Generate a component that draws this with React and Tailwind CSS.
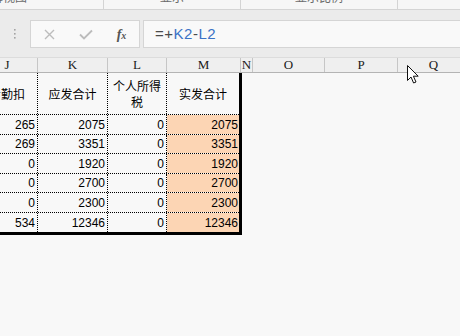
import React from 'react';

const rows = [
  { h: 'h-[20px]', v: ['265', '2075', '0', '2075'] },
  { h: 'h-[19px]', v: ['269', '3351', '0', '3351'] },
  { h: 'h-[20px]', v: ['0', '1920', '0', '1920'] },
  { h: 'h-[19px]', v: ['0', '2700', '0', '2700'] },
  { h: 'h-[20px]', v: ['0', '2300', '0', '2300'] },
  { h: 'h-[19px]', v: ['534', '12346', '0', '12346'], last: true },
];

const cols = [
  { l: 'J', w: 'w-[61px] -ml-[23px]' },
  { l: 'K', w: 'w-[70px]' },
  { l: 'L', w: 'w-[59px]' },
  { l: 'M', w: 'w-[74px]' },
  { l: 'N', w: 'w-[12px]' },
  { l: 'O', w: 'w-[72px]' },
  { l: 'P', w: 'w-[73px]' },
  { l: 'Q', w: 'w-[72px]' },
];

function Cursor() {
  return (
    <svg className="absolute left-[406px] top-[64px]" width="14" height="21" viewBox="0 0 14 21">
      <path
        d="M1.5 1.5 L1.5 16.5 L5 13 L7.6 19 L10 18 L7.4 12.2 L12.2 12.2 Z"
        fill="#fff"
        stroke="#111"
        strokeWidth="1"
        strokeLinejoin="round"
      />
    </svg>
  );
}

export default function App() {
  return (
    <div className="relative w-[460px] h-[336px] overflow-hidden bg-[#f8f8f8] font-['Liberation_Sans','Noto_Sans_CJK_SC',sans-serif]">
      {/* ribbon group labels, cut off at top */}
      <div className="flex h-[10px] overflow-hidden border-b border-[#d4d4d4] bg-[#f6f6f6] text-[12px] text-[#6a6a6a] font-['Noto_Sans_CJK_SC',sans-serif]">
        <div className="w-[104px] shrink-0 border-r border-[#d4d4d4]">
          <span className="block -ml-[33px] -mt-[10px] leading-[14px] whitespace-nowrap">工作簿视图</span>
        </div>
        <div className="w-[137px] shrink-0 border-r border-[#d4d4d4] flex justify-center">
          <span className="block -mt-[10px] leading-[14px]">显示</span>
        </div>
        <div className="w-[157px] shrink-0 border-r border-[#d4d4d4] flex justify-center">
          <span className="block -mt-[10px] leading-[14px]">显示比例</span>
        </div>
        <div className="flex-1" />
      </div>

      {/* formula bar */}
      <div className="flex bg-[#ebebeb] pt-[10px] pb-[9px]">
        <div className="w-[30px] shrink-0 flex justify-center items-center">
          <svg width="4" height="12" viewBox="0 0 4 12">
            <rect x="1" y="1" width="1.6" height="1.6" fill="#a3a3a3" />
            <rect x="1" y="5" width="1.6" height="1.6" fill="#a3a3a3" />
            <rect x="1" y="9" width="1.6" height="1.6" fill="#a3a3a3" />
          </svg>
        </div>
        <div className="w-[110px] h-[28px] shrink-0 flex items-center border border-[#d5d5d5] bg-[#f9f9f9]">
          <div className="w-[37px] flex justify-center">
            <svg width="11" height="11" viewBox="0 0 11 11">
              <path d="M1 1 L10 10 M10 1 L1 10" stroke="#bcbcbc" strokeWidth="1.4" />
            </svg>
          </div>
          <div className="w-[36px] flex justify-center">
            <svg width="14" height="11" viewBox="0 0 14 11">
              <path d="M1 5.5 L5 9.5 L13 1.5" stroke="#bcbcbc" strokeWidth="1.8" fill="none" />
            </svg>
          </div>
          <div className="w-[35px] flex justify-center items-baseline font-['Liberation_Serif',serif] italic text-[#555]">
            <span className="text-[14px] font-bold">f</span>
            <span className="text-[10px] font-bold">x</span>
          </div>
        </div>
        <div className="ml-[3px] -mr-[10px] flex-1 h-[28px] flex items-center pl-[11px] border border-[#d5d5d5] bg-[#f9f9f9] text-[15px] tracking-[0.5px]">
          <span className="text-[#4a4a4a]">=+</span>
          <span className="text-[#3b72c6]">K2</span>
          <span className="text-[#4a4a4a]">-</span>
          <span className="text-[#3b72c6]">L2</span>
        </div>
      </div>

      {/* column headers */}
      <div className="flex h-[16px] bg-[#efefef] border-t border-b border-[#b4b4b4] border-t-[#dcdcdc] font-['Liberation_Serif',serif] text-[13px] text-[#1a1a1a] leading-[14px]">
        {cols.map((c) => (
          <div key={c.l} className={`${c.w} shrink-0 border-r border-[#c6c6c6] flex justify-center items-center`}>
            {c.l}
          </div>
        ))}
      </div>

      {/* grid */}
      <div className="-ml-[23px] w-fit border-r-[3px] border-b-[3px] border-black text-[12px] text-black">
        <div className="flex h-[42px] border-b border-dotted border-black font-['Noto_Sans_CJK_SC',sans-serif] leading-[16px]">
          <div className="w-[61px] shrink-0 border-r border-dotted border-black flex items-center justify-center">考勤扣</div>
          <div className="w-[70px] shrink-0 border-r border-dotted border-black flex items-center justify-center">应发合计</div>
          <div className="w-[59px] shrink-0 border-r border-dotted border-black flex items-center justify-center text-center">
            个人所得<br />税
          </div>
          <div className="w-[72px] shrink-0 flex items-center justify-center">实发合计</div>
        </div>
        {rows.map((r, i) => (
          <div key={i} className={`flex ${r.h} ${r.last ? '' : 'border-b border-dotted border-black'}`}>
            <div className="w-[61px] shrink-0 border-r border-dotted border-black flex items-center justify-end pr-[2px]">{r.v[0]}</div>
            <div className="w-[70px] shrink-0 border-r border-dotted border-black flex items-center justify-end pr-[2px]">{r.v[1]}</div>
            <div className="w-[59px] shrink-0 border-r border-dotted border-black flex items-center justify-end pr-[2px]">{r.v[2]}</div>
            <div className="w-[72px] shrink-0 bg-[#fcd5b4] flex items-center justify-end pr-[1px]">{r.v[3]}</div>
          </div>
        ))}
      </div>

      <Cursor />
    </div>
  );
}
